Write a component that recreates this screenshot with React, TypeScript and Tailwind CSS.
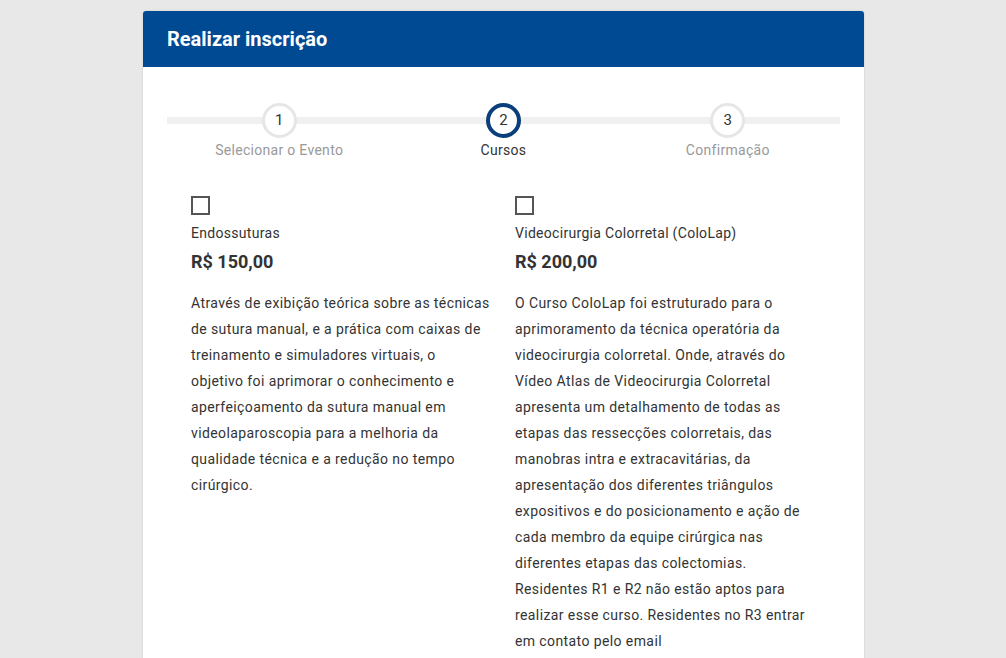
import React from "react";

const steps = [
  { n: "1", label: "Selecionar o Evento", active: false },
  { n: "2", label: "Cursos", active: true },
  { n: "3", label: "Confirmação", active: false },
];

const courses = [
  {
    name: "Endossuturas",
    price: "R$ 150,00",
    desc: "Através de exibição teórica sobre as técnicas de sutura manual, e a prática com caixas de treinamento e simuladores virtuais, o objetivo foi aprimorar o conhecimento e aperfeiçoamento da sutura manual em videolaparoscopia para a melhoria da qualidade técnica e a redução no tempo cirúrgico.",
  },
  {
    name: "Videocirurgia Colorretal (ColoLap)",
    price: "R$ 200,00",
    desc: "O Curso ColoLap foi estruturado para o aprimoramento da técnica operatória da videocirurgia colorretal. Onde, através do Vídeo Atlas de Videocirurgia Colorretal apresenta um detalhamento de todas as etapas das ressecções colorretais, das manobras intra e extracavitárias, da apresentação dos diferentes triângulos expositivos e do posicionamento e ação de cada membro da equipe cirúrgica nas diferentes etapas das colectomias. Residentes R1 e R2 não estão aptos para realizar esse curso. Residentes no R3 entrar em contato pelo email",
  },
];

export default function App() {
  return (
    <div
      className="w-[1006px] h-[658px] overflow-hidden bg-[#e8e8e8] pt-[11px]"
      style={{ fontFamily: "Roboto, 'Liberation Sans', sans-serif" }}
    >
      <div className="ml-[143px] w-[721px] h-[700px] bg-white rounded-t-[3px] shadow-[0_0_2px_rgba(0,0,0,0.15)]">
        <div className="h-[56px] bg-[#004a93] rounded-t-[3px] flex items-center px-[24px]">
          <h1 className="text-white text-[20px] font-bold tracking-[0px]">Realizar inscrição</h1>
        </div>
        <div className="px-[24px] pt-[36px]">
          <div className="relative">
            <div className="absolute left-0 right-0 top-[14px] h-[7px] bg-[#f0f0f0]" />
            <div className="relative grid grid-cols-3">
              {steps.map((s) => (
                <div key={s.n} className="flex flex-col items-center">
                  <div
                    className={
                      s.active
                        ? "w-[35px] h-[35px] rounded-full bg-white border-[4px] border-[#0b3f7c] flex items-center justify-center text-[15px] text-[#333]"
                        : "w-[35px] h-[35px] rounded-full bg-white border-[3px] border-[#e6e6e6] flex items-center justify-center text-[15px] text-[#333]"
                    }
                  >
                    {s.n}
                  </div>
                  <div
                    className={
                      s.active
                        ? "mt-[2px] text-[14px] leading-[20px] tracking-[0.3px] text-[#333]"
                        : "mt-[2px] text-[14px] leading-[20px] tracking-[0.3px] text-[#999]"
                    }
                  >
                    {s.label}
                  </div>
                </div>
              ))}
            </div>
          </div>
          <div className="grid grid-cols-[300px_300px] gap-x-[24px] pl-[24px] pt-[36px]">
            {courses.map((c) => (
              <div key={c.name} className="text-[#333]">
                <div className="w-[19px] h-[19px] border-[2px] border-[#555] bg-white" />
                <div className="mt-[8px] text-[14px] leading-[20px] tracking-[0.3px] text-[#333]">{c.name}</div>
                <div className="mt-[8px] text-[18px] leading-[22px] font-bold text-[#333]">{c.price}</div>
                <p className="mt-[17px] text-[14px] leading-[26px] tracking-[0.4px] text-[#333]">{c.desc}</p>
              </div>
            ))}
          </div>
        </div>
      </div>
    </div>
  );
}
